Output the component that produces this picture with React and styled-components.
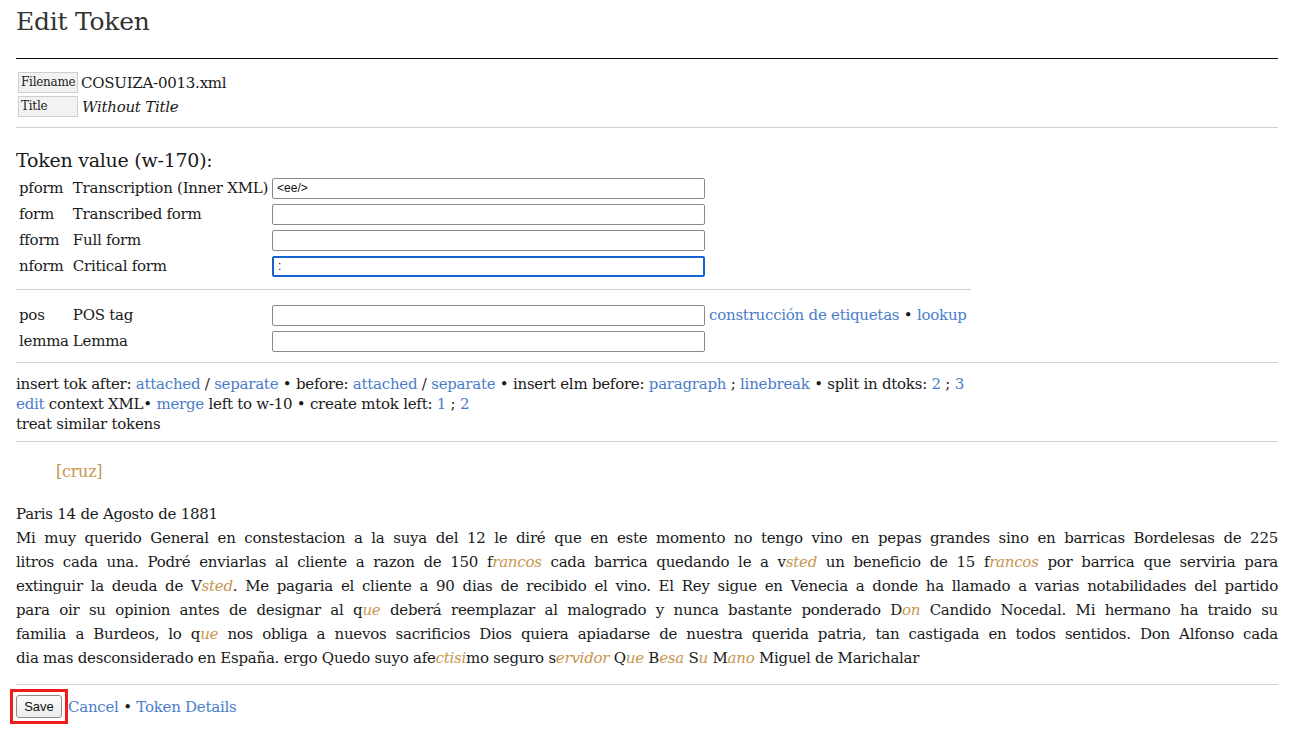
import React from 'react';
import styled, { createGlobalStyle } from 'styled-components';

const GlobalStyle = createGlobalStyle`
  body {
    margin: 0;
    background: #fff;
    color: #1a1a1a;
    font-family: "DejaVu Serif", "Liberation Serif", serif;
    font-size: 15px;
    letter-spacing: -0.25px;
  }
`;

const tokenFields = [
  { key: 'pform', label: 'Transcription (Inner XML)', value: '<ee/>' },
  { key: 'form', label: 'Transcribed form', value: '' },
  { key: 'fform', label: 'Full form', value: '' },
  { key: 'nform', label: 'Critical form', value: ':', focus: true },
];

const letterLines = [
  ['Mi muy querido General en constestacion a la suya del 12 le diré que en este momento no tengo vino en pepas grandes sino en barricas Bordelesas de 225'],
  ['litros cada una. Podré enviarlas al cliente a razon de 150 f', { ex: 'rancos' }, ' cada barrica quedando le a v', { ex: 'sted' }, ' un beneficio de 15 f', { ex: 'rancos' }, ' por barrica que serviria para'],
  ['extinguir la deuda de V', { ex: 'sted' }, '. Me pagaria el cliente a 90 dias de recibido el vino. El Rey sigue en Venecia a donde ha llamado a varias notabilidades del partido'],
  ['para oir su opinion antes de designar al q', { ex: 'ue' }, ' deberá reemplazar al malogrado y nunca bastante ponderado D', { ex: 'on' }, ' Candido Nocedal. Mi hermano ha traido su'],
  ['familia a Burdeos, lo q', { ex: 'ue' }, ' nos obliga a nuevos sacrificios Dios quiera apiadarse de nuestra querida patria, tan castigada en todos sentidos. Don Alfonso cada'],
  ['dia mas desconsiderado en España. ergo Quedo suyo afe', { ex: 'ctisi' }, 'mo seguro s', { ex: 'ervidor' }, ' Q', { ex: 'ue' }, ' B', { ex: 'esa' }, ' S', { ex: 'u' }, ' M', { ex: 'ano' }, ' Miguel de Marichalar'],
];

function App() {
  return (
    <Page>
      <GlobalStyle />
      <Title>Edit Token</Title>
      <Rule $dark />

      <MetaTable>
        <MetaLabel>Filename</MetaLabel>
        <MetaValue>COSUIZA-0013.xml</MetaValue>
        <MetaLabel>Title</MetaLabel>
        <MetaValue $italic>Without Title</MetaValue>
      </MetaTable>
      <Rule />

      <SubTitle>Token value (w-170):</SubTitle>
      <FormGrid>
        {tokenFields.map(({ key, label, value, focus }) => (
          <React.Fragment key={key}>
            <Cell>{key}</Cell>
            <Cell>{label}</Cell>
            <FieldCell><Field defaultValue={value} $focus={focus} /></FieldCell>
            <Cell />
          </React.Fragment>
        ))}
        <FormRule />
        <Cell>pos</Cell>
        <Cell>POS tag</Cell>
        <FieldCell><Field /></FieldCell>
        <Cell>
          <Link href="#">construcción de etiquetas</Link> • <Link href="#">lookup</Link>
        </Cell>
        <Cell>lemma</Cell>
        <Cell>Lemma</Cell>
        <FieldCell><Field /></FieldCell>
        <Cell />
      </FormGrid>
      <Rule />

      <Actions>
        <div>
          insert tok after: <Link href="#">attached</Link> / <Link href="#">separate</Link> • before:{' '}
          <Link href="#">attached</Link> / <Link href="#">separate</Link> • insert elm before:{' '}
          <Link href="#">paragraph</Link> ; <Link href="#">linebreak</Link> • split in dtoks:{' '}
          <Link href="#">2</Link> ; <Link href="#">3</Link>
        </div>
        <div>
          <Link href="#">edit</Link> context XML• <Link href="#">merge</Link> left to w-10 • create mtok left:{' '}
          <Link href="#">1</Link> ; <Link href="#">2</Link>
        </div>
        <div>treat similar tokens</div>
      </Actions>
      <Rule />

      <Context>
        <Cruz>[cruz]</Cruz>
        <Dateline>Paris 14 de Agosto de 1881</Dateline>
        <Letter>
          {letterLines.map((parts, i) => (
            <Line key={i} $last={i === letterLines.length - 1}>
              {parts.map((p, j) => (typeof p === 'string' ? p : <Ex key={j}>{p.ex}</Ex>))}
            </Line>
          ))}
        </Letter>
      </Context>
      <Rule />

      <Footer>
        <Highlight>
          <SaveButton type="button">Save</SaveButton>
        </Highlight>
        <span>
          <Link href="#">Cancel</Link> • <Link href="#">Token Details</Link>
        </span>
      </Footer>
    </Page>
  );
}

const Page = styled.div`
  padding: 0 15px 20px 16px;
`;

const Title = styled.h1`
  margin: 0;
  padding-top: 4px;
  height: 36px;
  font-size: 25px;
  font-weight: 400;
  color: #333;
  line-height: 36px;
`;

const Rule = styled.hr`
  margin: ${p => (p.$dark ? '18px 0 0' : '0')};
  border: 0;
  border-top: 1px solid ${p => (p.$dark ? '#111' : '#d0d0d0')};
`;

const MetaTable = styled.div`
  display: grid;
  grid-template-columns: 60px auto;
  justify-content: start;
  column-gap: 3px;
  row-gap: 3px;
  padding: 13px 0 10px 2px;
  align-items: center;
`;

const MetaLabel = styled.div`
  box-sizing: border-box;
  height: 21px;
  padding: 0 2px;
  background: #f2f2f2;
  border: 1px solid #cfcfcf;
  font-size: 12px;
  line-height: 19px;
  color: #222;
`;

const MetaValue = styled.div`
  font-size: 15px;
  font-style: ${p => (p.$italic ? 'italic' : 'normal')};
  padding-left: ${p => (p.$italic ? '1px' : '0')};
`;

const SubTitle = styled.h3`
  margin: 20px 0 0;
  font-size: 19px;
  font-weight: 400;
  line-height: 24px;
`;

const FormGrid = styled.div`
  display: grid;
  justify-content: start;
  grid-template-columns: auto auto 437px auto;
  align-items: center;
  padding: 3px 0 8px 3px;
`;

const Cell = styled.div`
  height: 26px;
  line-height: 26px;
  white-space: nowrap;
  padding-right: 4px;
`;

const FieldCell = styled.div`
  height: 26px;
  display: flex;
  align-items: center;
`;

const FormRule = styled.div`
  grid-column: 1 / -1;
  height: 23px;
  margin-left: -3px;
  display: flex;
  align-items: flex-start;
  padding-top: 10px;
  box-sizing: border-box;
  &::before {
    content: '';
    flex: 1;
    border-top: 1px solid #d0d0d0;
  }
`;

const Field = styled.input`
  box-sizing: border-box;
  display: block;
  width: 433px;
  height: 21px;
  padding: 0 4px;
  margin: 0;
  border: ${p => (p.$focus ? '2px solid #1463d3' : '1px solid #8a8a8a')};
  border-radius: 2px;
  font-family: "Liberation Sans", Arial, sans-serif;
  font-size: 12px;
  letter-spacing: 0;
  color: #111;
  outline: none;
  background: #fff;
`;

const Link = styled.a`
  color: #4a7dc9;
  text-decoration: none;
`;

const Actions = styled.div`
  padding: 11px 0 7px;
  line-height: 20px;
`;

const Context = styled.div`
  padding: 18px 0 14px;
`;

const Cruz = styled.div`
  margin-left: 40px;
  font-size: 16px;
  line-height: 24px;
  color: #c8964f;
`;

const Dateline = styled.div`
  margin-top: 18px;
  line-height: 24px;
`;

const Letter = styled.div`
  line-height: 24px;
`;

const Line = styled.div`
  text-align: justify;
  text-align-last: ${p => (p.$last ? 'left' : 'justify')};
  white-space: nowrap;
`;

const Ex = styled.i`
  color: #c8964f;
`;

const Footer = styled.div`
  display: flex;
  align-items: center;
  gap: 6px;
  padding-top: 10px;
`;

const Highlight = styled.span`
  position: relative;
  display: inline-flex;
  &::after {
    content: '';
    position: absolute;
    inset: -6px;
    border: 3px solid #ee1c1c;
    pointer-events: none;
  }
`;

const SaveButton = styled.button`
  box-sizing: border-box;
  width: 46px;
  height: 23px;
  padding: 0;
  font-family: "Liberation Sans", Arial, sans-serif;
  font-size: 13px;
  letter-spacing: 0;
  color: #111;
  background: linear-gradient(#fbfbfb, #ececec);
  border: 1px solid #8e8e8e;
  border-radius: 3px;
`;

export default App;
